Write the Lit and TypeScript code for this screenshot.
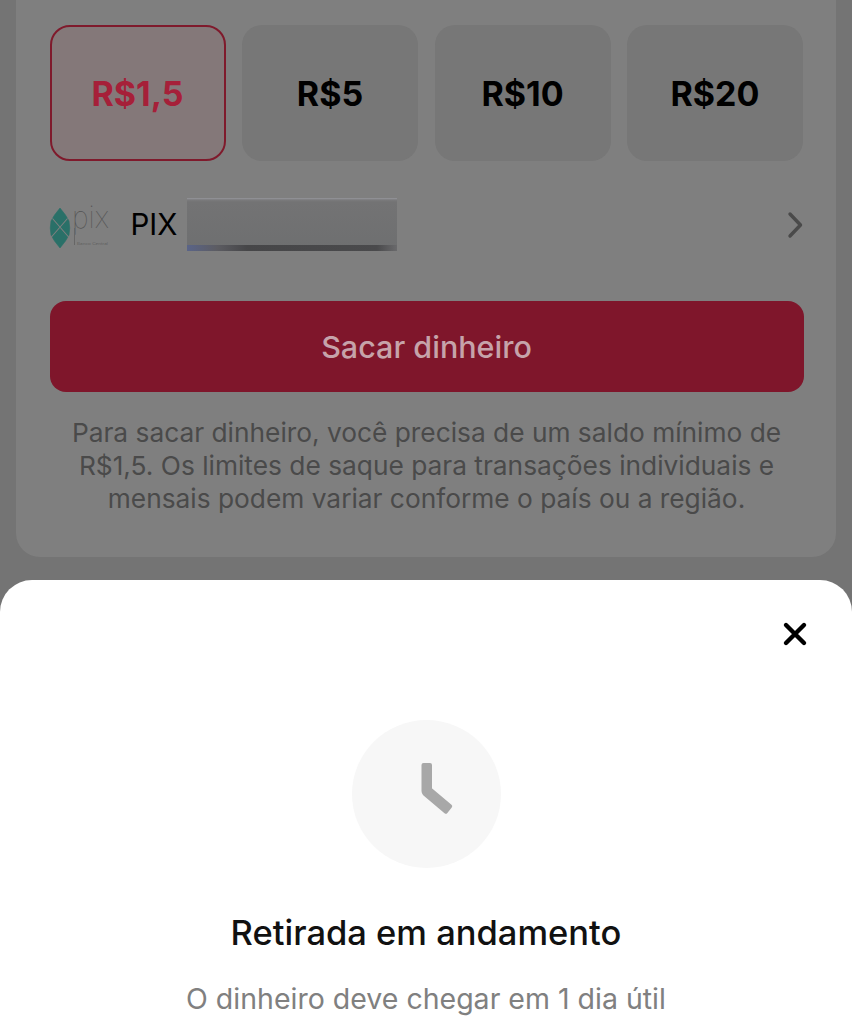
import { LitElement, html, css } from "lit";
import { customElement } from "lit/decorators.js";

@customElement("app-root")
export class AppRoot extends LitElement {
  static styles = css`
    :host { display: block; width: 852px; height: 1024px; overflow: hidden; font-family: Inter, "Noto Sans", sans-serif; background: #747474; }
    * { box-sizing: border-box; }
    .page { display: flex; flex-direction: column; height: 1024px; }
    .top { height: 580px; padding: 0 16px; flex: none; background: #747474; }
    .card { height: 557px; background: #7f7f7f; border-radius: 0 0 24px 24px; padding: 25px 32.500px 0 33.500px; }
    .amounts { display: grid; grid-template-columns: repeat(4, 176px); column-gap: 16.500px; }
    .amt { height: 136px; border-radius: 20px; background: #777777; display: flex; align-items: center; justify-content: center; font-size: 34px; font-weight: 700; color: #000; }
    .amt.sel { background: #847879; border: 2.500px solid #7f1a2c; color: #a62039; }
    .pix { margin-top: 36px; height: 56px; display: flex; align-items: center; }
    .logo { width: 62px; height: 56px; flex: none; overflow: visible; }
    .pixlabel { margin-left: 19px; font-size: 29.500px; color: #000; width: 56px; flex: none; line-height: 1; }
    .mask { width: 210px; height: 53px; flex: none; margin-top: -2px;
      background:
        linear-gradient(90deg, #5a6488 0, #5c5c62 30px, #464648 60px, #4a4a4c 190px, #6a6a6c 210px) 0 100% / 100% 6px no-repeat,
        linear-gradient(180deg, #96979c 0, #7a7a7c 2px, #737374 4px, #6e6f70 100%);
    }
    .chev { margin-left: auto; width: 18px; height: 28px; flex: none; }
    .cta { margin-top: 48px; height: 91px; border-radius: 16px; background: #7f162b; color: #c6a3aa; font-size: 30.500px; font-weight: 500; display: flex; align-items: center; justify-content: center; }
    .note { margin: 24px -6px 0; text-align: center; font-size: 26.300px; line-height: 33px; color: #4a4a4a; }
    .sheet { flex: 1; background: #fff; border-radius: 32px 32px 0 0; display: flex; flex-direction: column; align-items: center; position: relative; padding-top: 140px; }
    .close { position: absolute; top: 41px; right: 44px; width: 26px; height: 26px; }
    .circle { width: 149px; height: 148px; border-radius: 50%; background: #f7f7f7; display: flex; align-items: center; justify-content: center; flex: none; }
    .title { margin-top: 43px; font-size: 34.500px; font-weight: 500; line-height: 44px; color: #111; }
    .sub { margin-top: 22px; font-size: 28.500px; line-height: 44px; color: #808080; }
  `;

  render() {
    return html`
      <div class="page">
        <div class="top">
          <div class="card">
            <div class="amounts">
              <div class="amt sel">R$1,5</div>
              <div class="amt">R$5</div>
              <div class="amt">R$10</div>
              <div class="amt">R$20</div>
            </div>
            <div class="pix">
              <svg class="logo" viewBox="0 0 62 56">
                <path d="M10 11 L15.500 18 L19 24 Q20.500 31 19 38 L15.500 44 L10 51 L4.500 44 L1 38 Q-0.500 31 1 24 L4.500 18 Z" fill="#2a7068" stroke="#2a7068" stroke-width="0.600" stroke-linejoin="round" />
                <path d="M2.500 21.500 L19 40.500 M17.500 21.500 L1 40.500" fill="none" stroke="#7f7f7f" stroke-width="1.100" />
                <text x="22" y="31" font-family="Inter" font-size="31" font-weight="100" fill="#555" textLength="37" lengthAdjust="spacingAndGlyphs">pix</text>
                <path d="M24.500 31 V48" stroke="#666" stroke-width="1" fill="none" />
                <text x="27" y="47.500" font-family="Inter" font-size="3.500" fill="#5f5f5f" textLength="31" lengthAdjust="spacingAndGlyphs">Banco Central</text>
              </svg>
              <div class="pixlabel">PIX</div>
              <div class="mask"></div>
              <svg class="chev" viewBox="0 0 18 28" fill="none" stroke="#4a4a4a" stroke-width="3.400" stroke-linecap="round" stroke-linejoin="round">
                <path d="M4 3 L14.500 14 L4 25" />
              </svg>
            </div>
            <div class="cta">Sacar dinheiro</div>
            <div class="note">Para sacar dinheiro, você precisa de um saldo mínimo de R$1,5. Os limites de saque para transações individuais e mensais podem variar conforme o país ou a região.</div>
          </div>
        </div>
        <div class="sheet">
          <svg class="close" viewBox="0 0 26 26" fill="none" stroke="#000" stroke-width="4.400" stroke-linecap="round">
            <path d="M4 4 L22 22 M22 4 L4 22" />
          </svg>
          <div class="circle">
            <svg width="148" height="148" viewBox="0 0 148 148" fill="#a8a8a8" stroke="#a8a8a8" stroke-width="4" stroke-linejoin="round">
              <path d="M71.500 45 H78 V69.300 L98.200 86.300 L93.800 91.700 L72.500 73.700 Q71.500 72.600 71.500 71 Z" />
            </svg>
          </div>
          <div class="title">Retirada em andamento</div>
          <div class="sub">O dinheiro deve chegar em 1 dia útil</div>
        </div>
      </div>
    `;
  }
}
